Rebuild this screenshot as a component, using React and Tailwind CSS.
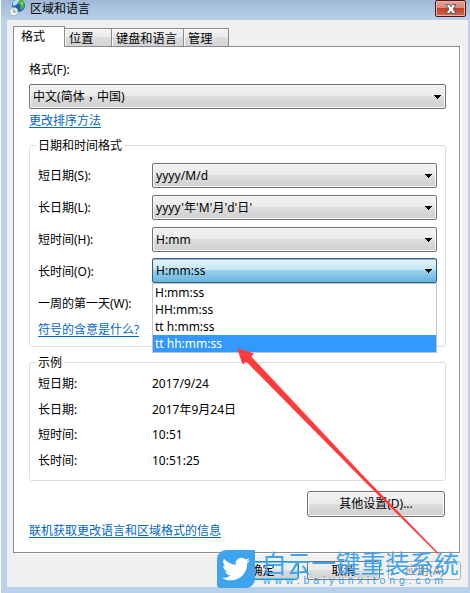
import React from "react";
import { FaTwitter } from "react-icons/fa";

const dateRows = [
  { label: "短日期(S):", value: "yyyy/M/d" },
  { label: "长日期(L):", value: "yyyy'年'M'月'd'日'" },
  { label: "短时间(H):", value: "H:mm" },
];

const timeFormats = ["H:mm:ss", "HH:mm:ss", "tt h:mm:ss", "tt hh:mm:ss"];

const samples = [
  { label: "短日期:", value: "2017/9/24" },
  { label: "长日期:", value: "2017年9月24日" },
  { label: "短时间:", value: "10:51" },
  { label: "长时间:", value: "10:51:25" },
];

const grey =
  "border-[#707070] bg-[linear-gradient(#f2f2f2,#ebebeb_48%,#dddddd_50%,#cfcfcf)] shadow-[inset_0_0_0_1px_#f9f9f9]";
const blue =
  "border-[#2c628b] bg-[linear-gradient(#e5f4fc,#c4e5f6_48%,#98d1ef_50%,#68b3db)] shadow-[inset_0_1px_0_#9eb0ba]";

const Select = ({ value, open }) => (
  <div
    className={`flex h-[25px] w-full items-center justify-between rounded-[2px] border pl-[3px] pr-[3px] ${open ? blue : grey}`}
  >
    <span className="tracking-[0.05px]">{value}</span>
    <svg width="8" height="4" viewBox="0 0 8 4" shapeRendering="crispEdges">
      <path d="M0 0h7v1H0zM1 1h5v1H1zM2 2h3v1H2zM3 3h1v1H3z" />
    </svg>
  </div>
);

const Tab = ({ className, children }) => (
  <div
    className={`h-[18px] border border-b-0 border-l-0 border-[#898c95] bg-[linear-gradient(#f2f2f2,#ebebeb_48%,#dddddd_50%,#d3d3d3)] pl-[4px] text-[12.2px] leading-[20px] shadow-[inset_1px_1px_0_#fafafa] ${className}`}
  >
    {children}
  </div>
);

const Group = ({ title, className, children }) => (
  <div className={`relative rounded-[3px] border border-[#d5dfe5] ${className}`}>
    <span className="absolute -top-[9px] left-[6px] bg-white px-[2px] leading-[18px]">
      {title}
    </span>
    {children}
  </div>
);

const Link = ({ className, children }) => (
  <a
    className={`block w-max border-b border-[#0066cc] leading-[13px] text-[#0066cc] ${className}`}
  >
    {children}
  </a>
);

const Globe = () => (
  <svg className="shrink-0" width="17" height="17" viewBox="0 0 17 17">
    <circle cx="9.5" cy="5.5" r="6.5" fill="#1f5fb4" />
    <path d="M4 2l4-3h3L9 3 7 5 4 6z" fill="#a9e3f3" />
    <path d="M10 0h3l2.5 3-.5 4-2 3-2-1 .5-3-2-2z" fill="#4fb441" />
    <path d="M12 2l2 1-1 2-1-1z" fill="#b5e878" />
    <circle cx="4.8" cy="11.7" r="4.1" fill="#edf0f2" stroke="#9aa2a8" strokeWidth=".8" />
    <path d="M4.8 9v3h2.3" fill="none" stroke="#69747e" strokeWidth=".8" />
  </svg>
);

const App = () => {
  return (
    <div className="relative h-[593px] w-[470px] overflow-hidden bg-white pl-px font-['Noto_Sans','Noto_Sans_CJK_SC',sans-serif] text-[12px] leading-[16px] text-black">
      <div className="flex h-full flex-col bg-[#b9d1ea] pb-[6px] pl-[6px] pr-[2px]">
        <div className="-ml-[6px] -mr-[2px] flex h-[20px] shrink-0 items-start bg-[linear-gradient(#9fb9d6,#b9d1ea)] pl-[8px] pr-[4px]">
          <Globe />
          <span className="ml-[4px] leading-[17px]">区域和语言</span>
          <div className="ml-auto flex h-[17px] w-[31px] items-center justify-center rounded-[2px] border border-[#451821] bg-[linear-gradient(#e6a497,#d98778_46%,#bf4027_50%,#d26a50)] shadow-[inset_0_0_0_1px_#ecb5aa]">
            <svg width="12" height="10" viewBox="0 0 12 10">
              <path d="M1 .5h3.3L6 2.7 7.7.5H11L8 5l3 4.5H7.7L6 7.3 4.3 9.5H1L4 5z" fill="#fff" stroke="#565d6b" />
            </svg>
          </div>
        </div>

        <div className="flex grow flex-col bg-[#f0f0f0] pl-[6px] pr-[8px] pt-[6px]">
          <div className="flex h-[20px] shrink-0 items-end">
            <div className="z-10 -mb-px h-[21px] w-[52px] border border-b-0 border-[#898c95] bg-white pl-[7px] leading-[19px]">
              格式
            </div>
            <Tab className="w-[47px]">位置</Tab>
            <Tab className="w-[72px]">键盘和语言</Tab>
            <Tab className="w-[45px]">管理</Tab>
          </div>

          <div className="h-[507px] shrink-0 border border-[#898c95] bg-white pl-[15px] pr-[13px] pt-[15px] shadow-[2px_1px_0_#fff]">
            <div className="h-[22px]">格式(F):</div>
            <Select
              value={
                <>
                  中文(简体
                  <span className="relative top-[3px] font-['Noto_Sans_CJK_TC',sans-serif] leading-none">，</span>
                  中国)
                </>
              }
            />
            <Link className="mt-[5px]">更改排序方法</Link>

            <Group title="日期和时间格式" className="mt-[17px] h-[202px] pl-[8px] pr-[8px] pt-[17px]">
              {dateRows.map((row) => (
                <div key={row.label} className="flex h-[32px] items-start">
                  <span className="w-[114px] shrink-0 leading-[26px]">{row.label}</span>
                  <Select value={row.value} />
                </div>
              ))}
              <div className="relative -mt-px flex h-[33px] items-start">
                <span className="w-[114px] shrink-0 leading-[27px]">长时间(O):</span>
                <Select value="H:mm:ss" open />
                <ul className="absolute left-[114px] right-0 top-[25px] z-10 border border-[#c0c4d0] bg-white">
                  {timeFormats.map((format, i) => (
                    <li
                      key={format}
                      className={`h-[17px] pl-[2px] leading-[17px] ${i === 3 ? "bg-[#3399ff] text-white" : ""}`}
                    >
                      {format}
                    </li>
                  ))}
                </ul>
              </div>
              <div className="h-[32px] leading-[25px]">一周的第一天(W):</div>
              <Link>符号的含意是什么?</Link>
            </Group>

            <Group title="示例" className="mt-[15px] h-[119px] pl-[8px] pt-[13px]">
              {samples.map((row) => (
                <div key={row.label} className="flex h-[25.7px]">
                  <span className="w-[114px]">{row.label}</span>
                  <span>{row.value}</span>
                </div>
              ))}
            </Group>

            <button
              className={`ml-auto mr-px mt-[10px] block h-[26px] w-[138px] rounded-[3px] border ${grey}`}
            >
              其他设置(D)...
            </button>
            <Link className="mt-[7px]">联机获取更改语言和区域格式的信息</Link>
          </div>

          <div className="-mr-px mt-[8px] flex justify-end gap-[8px]">
            <button className="h-[19px] w-[73px] rounded-[3px] border border-[#3c7fb1] bg-[linear-gradient(#f2f2f2,#ebebeb_48%,#dddddd_50%,#cfcfcf)] leading-[17px] shadow-[inset_0_0_0_1px_#48d0ef]">
              确定
            </button>
            <button className={`h-[19px] w-[73px] rounded-[3px] border leading-[17px] ${grey}`}>
              取消
            </button>
            <button className="h-[19px] w-[73px] rounded-[3px] border border-[#adb2b5] bg-[#f4f4f4] leading-[17px] text-[#838383]">
              应用(A)
            </button>
          </div>
        </div>
      </div>

      {/* pointer to the selected format */}
      <svg className="absolute inset-0 z-20" width="470" height="593" viewBox="0 0 470 593">
        <path
          d="M237 348L254 353.5L251.5 356L252.5 358L300 408.5L367.3 480L438.5 553L437.5 554L363 480L247 362.5L245.5 362L242.5 364.5Z"
          fill="#ff3b3b"
        />
      </svg>

      {/* site watermark */}
      <div className="absolute left-[217px] top-[550px] z-30 flex items-start text-[#3fa3ee]">
        <div className="flex h-[38px] w-[38px] items-center justify-center rounded-bl-[3px] rounded-br-[9px] rounded-tl-[9px] rounded-tr-[1px] bg-[#3fa3ee]">
          <FaTwitter className="h-[28px] w-[28px] text-white" />
        </div>
        <div className="ml-[7px] w-[200px] whitespace-nowrap">
          <div className="h-[25px] font-['Noto_Sans_CJK_SC',sans-serif] text-[24.6px] font-normal leading-[25px]">
            白云一键重装系统
          </div>
          <div className="pl-px font-['Liberation_Sans',sans-serif] text-[10.5px] leading-[11px] tracking-[3.85px]">
            www.baiyunxitong.com
          </div>
        </div>
      </div>
    </div>
  );
};

export default App;
